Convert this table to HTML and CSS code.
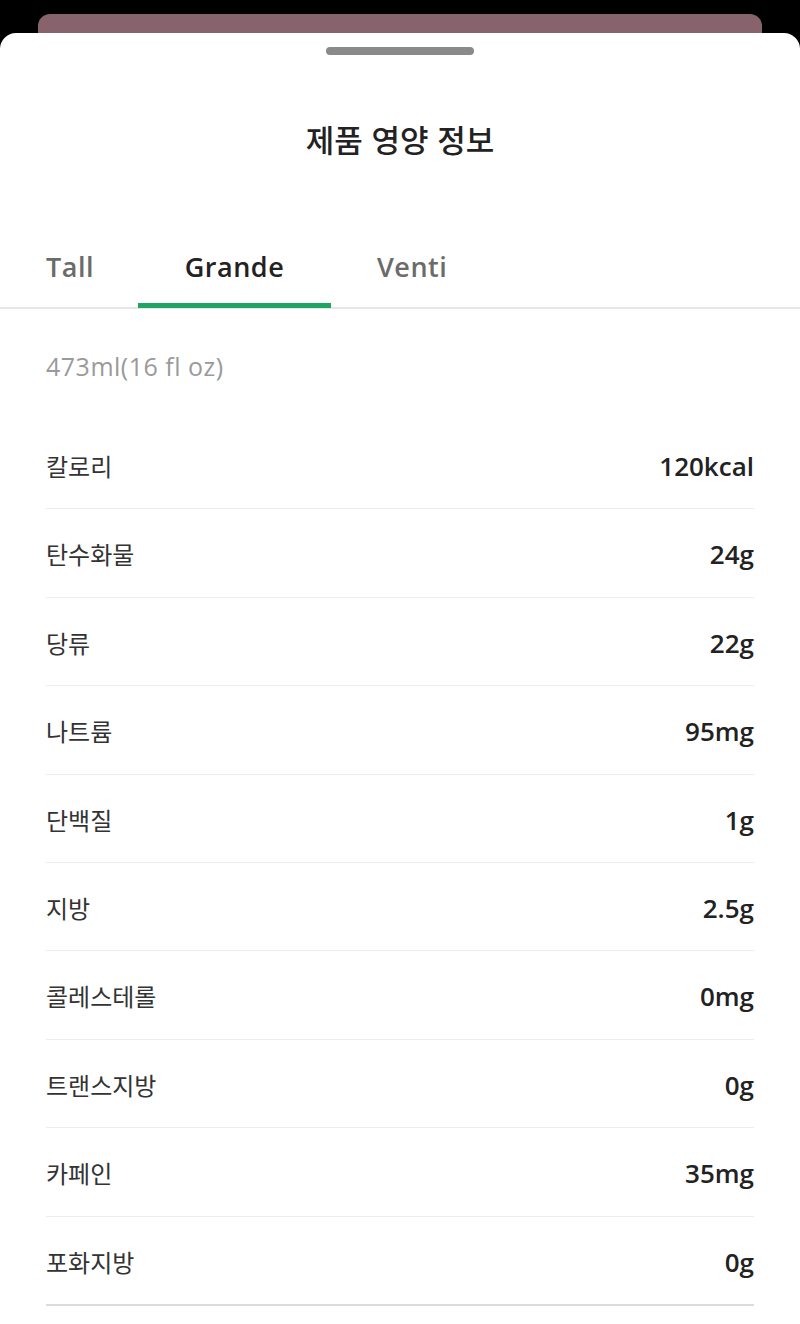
FILE: index.html
```html
<!DOCTYPE html>
<html lang="ko">
<head>
<meta charset="utf-8">
<link rel="stylesheet" href="styles.css">
</head>
<body>
<div class="backcard"></div>
<div class="sheet">
  <div class="handle"></div>
  <h1 class="title">제품 영양 정보</h1>
  <div class="tabs">
    <div class="tab tab-first">Tall</div>
    <div class="tab tab-mid active">Grande</div>
    <div class="tab tab-last">Venti</div>
  </div>
  <div class="size">473ml(16 fl oz)</div>
  <ul class="rows">
    <li class="row"><span class="label">칼로리</span><span class="value">120kcal</span></li>
    <li class="row"><span class="label">탄수화물</span><span class="value">24g</span></li>
    <li class="row"><span class="label">당류</span><span class="value">22g</span></li>
    <li class="row"><span class="label">나트륨</span><span class="value">95mg</span></li>
    <li class="row"><span class="label">단백질</span><span class="value">1g</span></li>
    <li class="row"><span class="label">지방</span><span class="value">2.5g</span></li>
    <li class="row"><span class="label">콜레스테롤</span><span class="value">0mg</span></li>
    <li class="row"><span class="label">트랜스지방</span><span class="value">0g</span></li>
    <li class="row"><span class="label">카페인</span><span class="value">35mg</span></li>
    <li class="row last"><span class="label">포화지방</span><span class="value">0g</span></li>
  </ul>
</div>
</body>
</html>
```

FILE: styles.css
```css
* { box-sizing: border-box; }
html, body { margin: 0; padding: 0; }
body {
  background: #000;
  font-family: "Noto Sans", "Noto Sans CJK KR", sans-serif;
  color: #222;
  height: 1324px;
  overflow: hidden;
}
.backcard {
  margin: 14px 38px 0;
  height: 19px;
  background: #87646d;
  border-radius: 12px 12px 0 0;
}
.sheet {
  background: #fff;
  border-radius: 16px 16px 0 0;
  height: 1291px;
  padding-top: 14px;
}
.handle {
  width: 148px;
  height: 8px;
  margin: 0 auto;
  border-radius: 4px;
  background: #8a8a8a;
}
.title {
  margin: 64px 0 0;
  font-size: 31px;
  line-height: 40px;
  font-weight: 500;
  text-align: center;
  color: #222;
  font-family: "Noto Sans CJK KR", sans-serif;
}
.tabs {
  display: flex;
  margin-top: 68px;
  border-bottom: 2px solid #e6e6e6;
}
.tab {
  padding: 20px 0 16px;
  line-height: 40px;
  font-size: 27px;
  letter-spacing: 0.5px;
  font-weight: 600;
  color: #6b6b6b;
  border-bottom: 5px solid transparent;
  margin-bottom: -1px;
  font-family: "Open Sans", sans-serif;
}
.tab-first { width: 138px; padding-left: 46px; }
.tab-mid { width: 193px; text-align: center; }
.tab-last { padding-left: 46px; }
.tab.active {
  color: #222;
  border-bottom-color: #1fa463;
}
.size {
  margin: 41px 46px 0;
  font-size: 25px;
  letter-spacing: 0.5px;
  line-height: 32px;
  color: #9a9a9a;
  font-family: "Open Sans", sans-serif;
}
.rows {
  list-style: none;
  margin: 39px 46px 0;
  padding: 0;
}
.row {
  display: flex;
  justify-content: space-between;
  align-items: center;
  padding: 30px 0 27.4px;
  line-height: 30px;
  border-bottom: 1px solid #ececec;
}
.row.last {
  border-bottom: 2px solid #dcdcdc;
}
.label {
  font-size: 24px;
  color: #333;
  font-family: "Noto Sans CJK KR", sans-serif;
}
.value {
  font-size: 26px;
  font-weight: 600;
  color: #222;
  font-family: "Open Sans", "Noto Sans CJK KR", sans-serif;
}
```
